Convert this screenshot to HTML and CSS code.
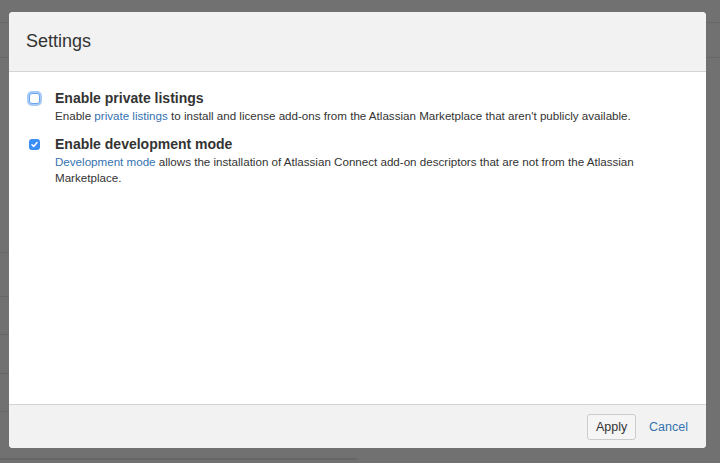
FILE: index.html
```html
<!DOCTYPE html>
<html>
<head>
<meta charset="utf-8">
<link rel="stylesheet" href="styles.css">
</head>
<body>
<div class="page">
  <div class="topbar"></div>
  <div class="subbar"></div>
  <div class="page-body">
    <div class="rows">
      <div class="row r1"></div>
      <div class="row r2"></div>
      <div class="row r3"></div>
      <div class="row r4"></div>
      <div class="row r5"></div>
      <div class="row r6"></div>
    </div>
  </div>
</div>

<div class="dialog">
  <div class="dialog-header">
    <h2 class="dialog-title">Settings</h2>
  </div>
  <div class="dialog-content">
    <div class="field">
      <span class="checkbox focused"></span>
      <div class="field-text">
        <div class="field-label">Enable private listings</div>
        <div class="field-desc">Enable <a class="link" href="#">private listings</a> to install and license add-ons from the Atlassian Marketplace that aren't publicly available.</div>
      </div>
    </div>
    <div class="field">
      <span class="checkbox checked">
        <svg width="11" height="11" viewBox="0 0 11 11"><path d="M3 5.8 L4.7 7.4 L8 3.6" fill="none" stroke="#fff" stroke-width="1.5" stroke-linecap="round" stroke-linejoin="round"/></svg>
      </span>
      <div class="field-text">
        <div class="field-label">Enable development mode</div>
        <div class="field-desc"><a class="link" href="#">Development mode</a> allows the installation of Atlassian Connect add-on descriptors that are not from the Atlassian Marketplace.</div>
      </div>
    </div>
  </div>
  <div class="dialog-footer">
    <button class="button">Apply</button>
    <a class="cancel" href="#">Cancel</a>
  </div>
</div>
</body>
</html>
```
FILE: styles.css
```css
html, body {
  margin: 0;
  padding: 0;
}
body {
  width: 720px;
  height: 463px;
  overflow: hidden;
  background: #717171;
  font-family: "Liberation Sans", Arial, sans-serif;
  color: #333;
  position: relative;
}
.page {
  display: flex;
  flex-direction: column;
}
.topbar {
  height: 22px;
  border-bottom: 1px solid #676767;
}
.subbar {
  height: 34px;
  border-bottom: 1px solid #676767;
}
.page-body {
  padding-top: 194px;
}
.rows {
  width: 357px;
  display: flex;
  flex-direction: column;
}
.row {
  border-top: 1px solid #666;
}
.r1 { height: 43px; }
.r2 { height: 37px; }
.r3 { height: 38px; }
.r4 { height: 37px; }
.r5 { height: 46px; }
.r6 { height: 4px; border-top: 2px solid #666; }

.dialog {
  position: absolute;
  left: 9px;
  top: 12px;
  width: 697px;
  height: 436px;
  background: #fff;
  border-radius: 4px;
  overflow: hidden;
  display: flex;
  flex-direction: column;
}
.dialog-header {
  height: 59px;
  background: #f2f2f2;
  border-bottom: 1px solid #d4d4d4;
  display: flex;
  align-items: center;
  padding-left: 17px;
}
.dialog-title {
  margin: 0;
  font-size: 18px;
  font-weight: normal;
  color: #333;
}
.dialog-content {
  flex: 1;
  padding: 16px 20px 0 20px;
  display: flex;
  flex-direction: column;
  gap: 10px;
}
.field {
  display: flex;
  align-items: flex-start;
}
.checkbox {
  flex: none;
  width: 11px;
  height: 11px;
  box-sizing: border-box;
  border-radius: 3px;
  margin-right: 15px;
  display: flex;
}
.checkbox.focused {
  margin-top: 5px;
  background: #fff;
  border: 1px solid #6aa5ef;
  box-shadow: 0 0 0 2px rgba(94, 158, 240, 0.55);
}
.checkbox.checked {
  margin-top: 5px;
  background: #3a8ef5;
}
.field-text {
  width: 615px;
}
.field-label {
  font-size: 14px;
  font-weight: bold;
  line-height: 20px;
  color: #333;
}
.field-desc {
  font-size: 11.6px;
  line-height: 16px;
  color: #333;
}
.link {
  color: #3572b0;
  text-decoration: none;
}
.dialog-footer {
  height: 43px;
  background: #f2f2f2;
  border-top: 1px solid #d4d4d4;
  display: flex;
  align-items: center;
  justify-content: flex-end;
  padding-right: 18px;
  gap: 13px;
}
.button {
  width: 49px;
  height: 26px;
  padding: 0;
  background: #f5f5f5;
  border: 1px solid #ccc;
  border-radius: 3px;
  font-family: "Liberation Sans", Arial, sans-serif;
  font-size: 12.5px;
  color: #333;
}
.cancel {
  font-size: 12.5px;
  color: #3572b0;
  text-decoration: none;
}
```
